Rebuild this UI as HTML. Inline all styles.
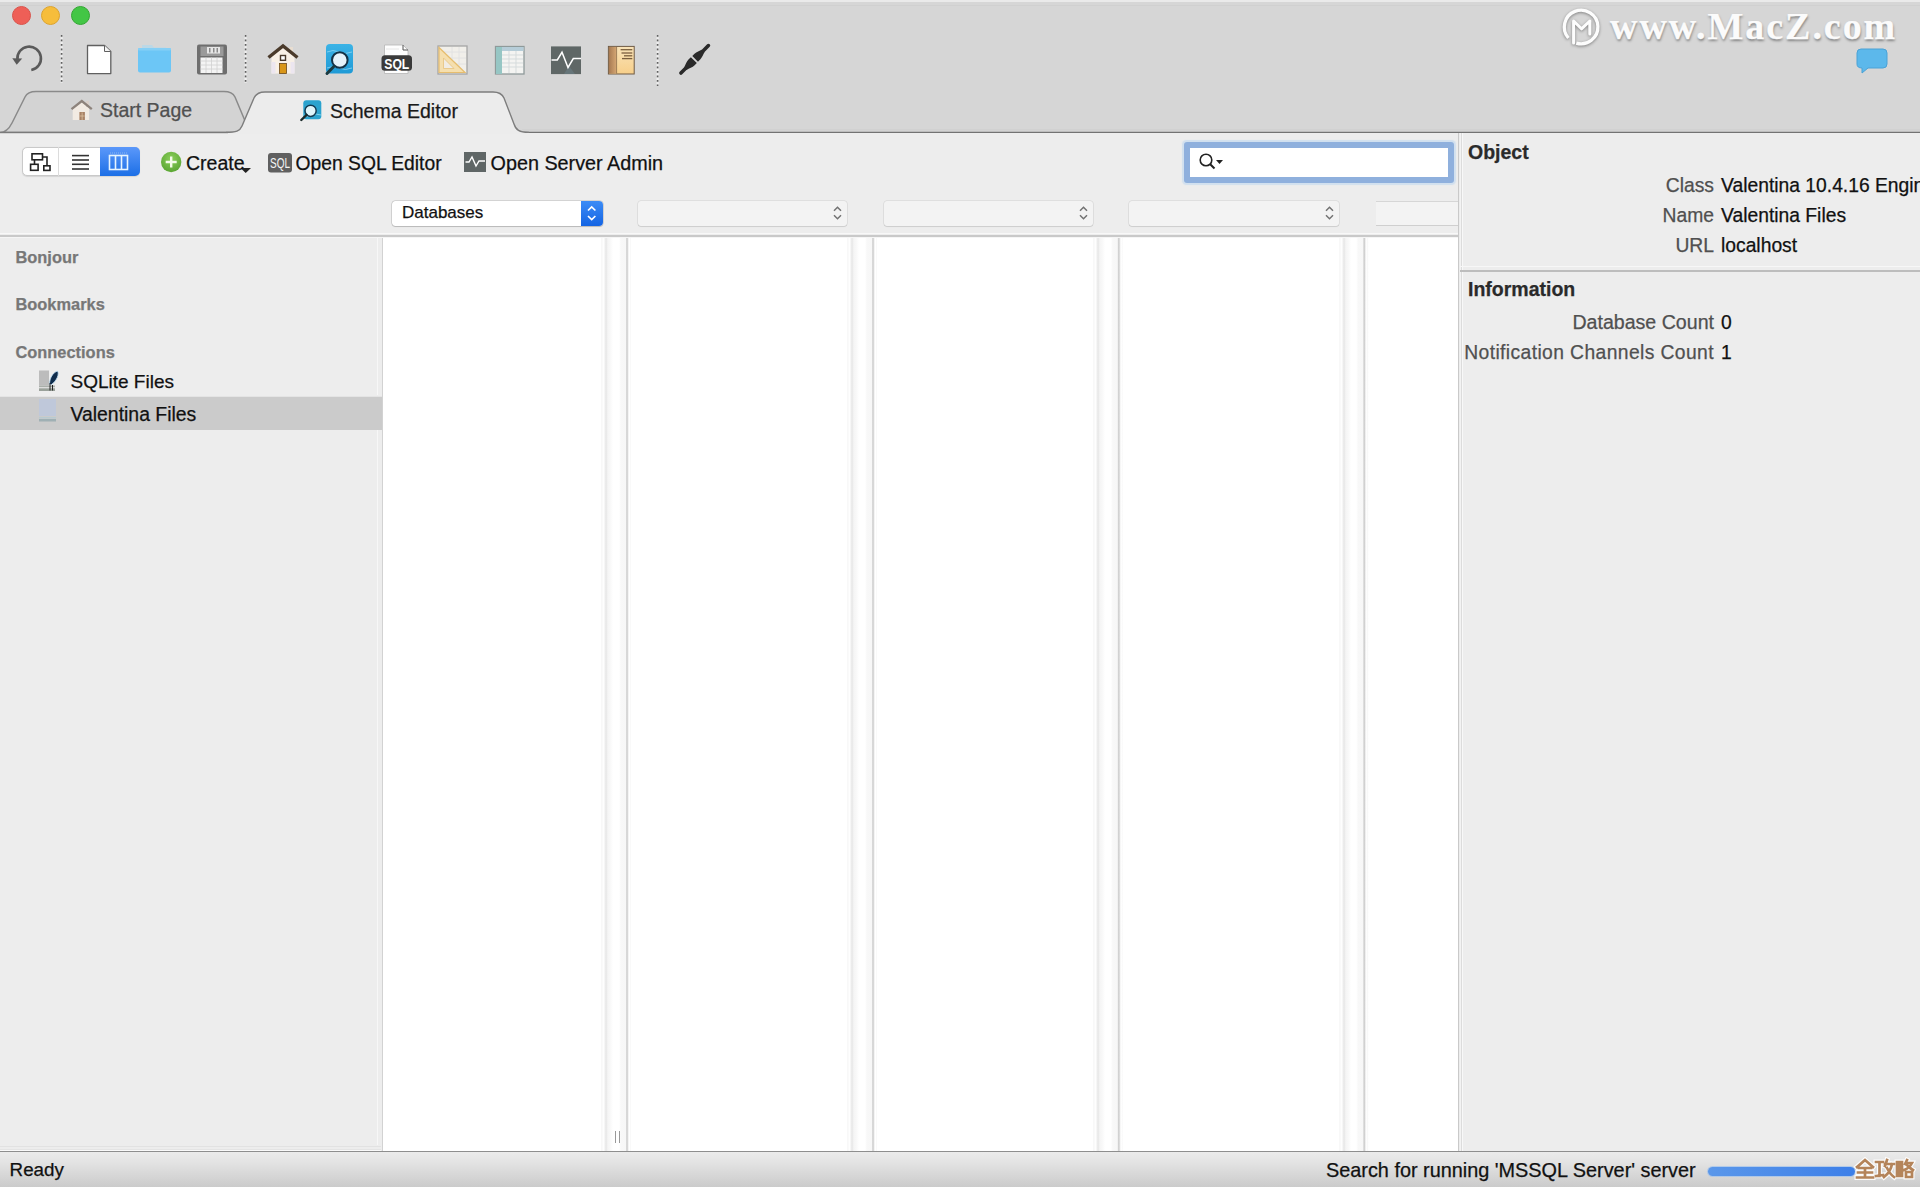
<!DOCTYPE html>
<html><head><meta charset="utf-8">
<style>
*{margin:0;padding:0;box-sizing:border-box}
html,body{width:1920px;height:1187px;overflow:hidden;background:#ededed;font-family:"Liberation Sans",sans-serif;color:#1d1d1d}
.a{position:absolute}
.t{position:absolute;white-space:pre;line-height:1;-webkit-text-stroke:0.25px currentColor}
svg{position:absolute;overflow:visible}
</style></head><body>
<!-- title/toolbar -->
<div class="a" style="left:0;top:0;width:1920px;height:132px;background:#d6d6d6"></div>
<div class="a" style="left:0;top:0;width:1920px;height:2px;background:#eaeaea"></div>
<div class="a" style="left:0;top:5px;width:1920px;height:1.2px;background:#d0d0d0"></div>
<div class="a" style="left:11.5px;top:6px;width:19px;height:19px;border-radius:50%;background:#ee5f57;border:1px solid #d9534b"></div>
<div class="a" style="left:41px;top:6px;width:19px;height:19px;border-radius:50%;background:#f6bd3b;border:1px solid #dca32e"></div>
<div class="a" style="left:70.5px;top:6px;width:19px;height:19px;border-radius:50%;background:#43c645;border:1px solid #33a633"></div>

<!-- TOOLBAR ICONS -->
<svg id="icons" width="1920" height="132" style="left:0;top:0">
  <!-- undo -->
  <path d="M17.4,59.5 A11.8,11.8 0 1 1 31.3,70" fill="none" stroke="#5a5a5a" stroke-width="2.6"/>
  <path d="M12.3,58.2 L22.2,58.4 L16.7,64.8 Z" fill="#5a5a5a"/>
  <!-- separators -->
  <line x1="61.6" y1="35" x2="61.6" y2="83" stroke="#fafafa" stroke-width="2.2" stroke-dasharray="2.2,2.3" stroke-dashoffset="-2.2" opacity="0.7"/><line x1="61.6" y1="35" x2="61.6" y2="83" stroke="#606060" stroke-width="1.5" stroke-dasharray="1.8,2.7"/>
  <line x1="245.6" y1="35" x2="245.6" y2="83" stroke="#fafafa" stroke-width="2.2" stroke-dasharray="2.2,2.3" stroke-dashoffset="-2.2" opacity="0.7"/><line x1="245.6" y1="35" x2="245.6" y2="83" stroke="#606060" stroke-width="1.5" stroke-dasharray="1.8,2.7"/>
  <line x1="657.6" y1="35" x2="657.6" y2="86" stroke="#fafafa" stroke-width="2.2" stroke-dasharray="2.2,2.3" stroke-dashoffset="-2.2" opacity="0.7"/><line x1="657.6" y1="35" x2="657.6" y2="86" stroke="#606060" stroke-width="1.5" stroke-dasharray="1.8,2.7"/>
  <!-- new doc -->
  <path d="M87.5,45.5 L104.5,45.5 L110.8,51.5 L110.8,73.6 L87.5,73.6 Z" fill="#fff" stroke="#606060" stroke-width="1.3" stroke-linejoin="round"/>
  <path d="M104.5,45.5 L104.5,51.5 L110.8,51.5" fill="#f4f4f4" stroke="#606060" stroke-width="1"/>
  <!-- folder -->
  <path d="M142,45 L152,45 L154,47.5 L166,47.5 L166,50 L142,50 Z" fill="#bcd8e6"/>
  <rect x="138" y="48" width="33" height="24.5" rx="2" fill="#6cc6f6"/>
  <rect x="138" y="48" width="33" height="2.5" rx="1" fill="#86cff5"/>
  <!-- save -->
  <rect x="197" y="44.5" width="30" height="30" rx="2" fill="#6e6e6e"/>
  <rect x="200.5" y="46.5" width="23" height="9.5" fill="#9a9a9a"/>
  <rect x="207" y="47" width="13" height="6.5" fill="#e6e6e6"/>
  <g fill="#8a8a8a"><rect x="209" y="48" width="1.5" height="4.5"/><rect x="213" y="48" width="1.5" height="4.5"/><rect x="216.5" y="48" width="1.5" height="4.5"/></g>
  <rect x="200.5" y="57.5" width="22" height="15.5" fill="#f4f4f4"/>
  <g stroke="#d0d0d0" stroke-width="0.8"><line x1="200.5" y1="61" x2="222.5" y2="61"/><line x1="200.5" y1="65" x2="222.5" y2="65"/><line x1="200.5" y1="69" x2="222.5" y2="69"/><line x1="206" y1="57.5" x2="206" y2="73"/><line x1="211.5" y1="57.5" x2="211.5" y2="73"/><line x1="217" y1="57.5" x2="217" y2="73"/></g>
  <!-- home -->
  <rect x="289.5" y="47" width="3.5" height="7" fill="#e8ddd0"/>
  <path d="M271.5,56 L283,46.5 L294.5,56 L294.5,73.5 L271.5,73.5 Z" fill="#f8f0e6"/>
  <rect x="271.5" y="62" width="4" height="11.5" fill="#ece6f0"/>
  <rect x="290.5" y="62" width="4" height="11.5" fill="#ece6f0"/>
  <path d="M268.5,57.5 L283,46 L297.5,57.5" fill="none" stroke="#4a3a2b" stroke-width="3.4" stroke-linejoin="miter"/>
  <rect x="279.5" y="63.5" width="7" height="10" fill="#d99618" stroke="#6b4a1c" stroke-width="0.8"/>
  <rect x="280.5" y="55.5" width="5" height="4.8" fill="#fff" stroke="#4a3a2b" stroke-width="1.4"/>
  <!-- schema editor -->
  <defs><linearGradient id="sg" x1="0" y1="0" x2="0" y2="1"><stop offset="0" stop-color="#3bb3e6"/><stop offset="1" stop-color="#1f9ad6"/></linearGradient></defs>
  <rect x="326" y="44" width="27" height="29.5" rx="4" fill="url(#sg)"/>
  <g fill="none" stroke="#8fd6f3" stroke-width="1" opacity="0.8"><path d="M327,52 Q333,49 339,52 T352,52"/><path d="M327,68 Q333,65 339,68 T352,68"/></g>
  <circle cx="339.8" cy="60" r="7.8" fill="#e6f3fa" stroke="#143246" stroke-width="2"/>
  <line x1="333.8" y1="66.5" x2="327" y2="73.5" stroke="#1b3a40" stroke-width="3" stroke-linecap="round"/>
  <!-- SQL -->
  <path d="M384.5,45 L403,45 L408,50 L408,73.5 L384.5,73.5 Z" fill="#fdfdfd" stroke="#b5b5b5" stroke-width="0.8"/>
  <path d="M403,45 L403,50 L408,50" fill="none" stroke="#555" stroke-width="1"/>
  <line x1="386" y1="49" x2="399" y2="49" stroke="#e0e0e0" stroke-width="0.8"/>
  <rect x="381.5" y="55.3" width="30.5" height="15.5" rx="3.5" fill="#3a3a3a"/>
  <text x="396.8" y="68.6" text-anchor="middle" font-family="Liberation Sans" font-weight="bold" font-size="14.5" fill="#fff" textLength="25" lengthAdjust="spacingAndGlyphs">SQL</text>
  <!-- ruler/diagram -->
  <rect x="438" y="46" width="29" height="28" fill="#f1efea" stroke="#a5a5a5" stroke-width="1.3"/>
  <g stroke="#e2e2e2" stroke-width="1"><line x1="439" y1="52" x2="466" y2="52"/><line x1="439" y1="58" x2="466" y2="58"/><line x1="439" y1="64" x2="466" y2="64"/><line x1="452" y1="47" x2="452" y2="73"/><line x1="459" y1="47" x2="459" y2="73"/></g>
  <path d="M439,47.5 L439,72.5 L465,72.5 Z" fill="#f5dfae" stroke="#e6bd6e" stroke-width="1.2"/>
  <path d="M443.5,58 L443.5,68.5 L454,68.5 Z" fill="#f1ece3" stroke="#e6c37e" stroke-width="0.8"/>
  <!-- table -->
  <rect x="495.5" y="46.5" width="28.5" height="27.5" fill="#f4f4f2" stroke="#8f9a9a" stroke-width="1.3"/>
  <rect x="496" y="47" width="6" height="27" fill="#96c6c4"/>
  <rect x="502" y="47" width="21.5" height="4" fill="#b6cdd8"/>
  <g stroke="#d5dbdc" stroke-width="1"><line x1="502" y1="55" x2="523" y2="55"/><line x1="502" y1="59" x2="523" y2="59"/><line x1="502" y1="63" x2="523" y2="63"/><line x1="502" y1="67" x2="523" y2="67"/><line x1="509" y1="51" x2="509" y2="73"/><line x1="516" y1="51" x2="516" y2="73"/></g>
  <!-- activity -->
  <rect x="551" y="46.4" width="30" height="27.7" fill="#5f6766"/>
  <path d="M564,74 L569,66 L575,74 Z" fill="#6a7f86" opacity="0.6"/>
  <path d="M551.5,60 L557.3,60 L562,52.3 L568,67.5 L573.3,58.5 L581,58.5" fill="none" stroke="#fff" stroke-width="1.5" stroke-linejoin="miter"/>
  <!-- book -->
  <defs><linearGradient id="bk" x1="0" y1="0" x2="1" y2="0"><stop offset="0" stop-color="#a77a52"/><stop offset="1" stop-color="#d4a673"/></linearGradient>
  <linearGradient id="pg" x1="0" y1="0" x2="0" y2="1"><stop offset="0" stop-color="#f9e3b8"/><stop offset="1" stop-color="#f7cf8a"/></linearGradient></defs>
  <rect x="608.4" y="46.4" width="25.8" height="27.6" fill="url(#pg)" stroke="#6e5a45" stroke-width="1"/>
  <rect x="608.9" y="46.9" width="7.5" height="26.6" fill="url(#bk)"/>
  <line x1="616.6" y1="47" x2="616.6" y2="73.5" stroke="#8a6a48" stroke-width="0.8"/>
  <g stroke="#7a5e3e" stroke-width="1.3"><line x1="620.6" y1="49.7" x2="632.3" y2="49.7"/><line x1="621.5" y1="53" x2="632.3" y2="53"/><line x1="624" y1="55.8" x2="632.3" y2="55.8"/><line x1="622" y1="58.6" x2="632.3" y2="58.6"/></g>
  <!-- plug -->
  <g transform="translate(694.5,59.5) rotate(-45)" fill="#2a2a2a">
    <rect x="-21" y="-1.8" width="10" height="3.6" rx="1.8"/>
    <path d="M-13,-1.8 C-10,-2.5 -7,-4.2 -4,-4.2 L-0.9,-4.2 L-0.9,4.2 L-4,4.2 C-7,4.2 -10,2.5 -13,1.8 Z"/>
    <path d="M0.9,-4 L4,-4 C7,-4 9.5,-2.5 12.5,-1.8 L12.5,1.8 C9.5,2.5 7,4 4,4 L0.9,4 Z"/>
    <rect x="11" y="-1.8" width="10.5" height="3.6" rx="1.8"/>
  </g>
  <!-- chat bubble -->
  <path d="M1861,49 L1883,49 Q1887,49 1887,53 L1887,64 Q1887,68 1883,68 L1868,68 L1862,73 L1862,68 Q1857,68 1857,64 L1857,53 Q1857,49 1861,49Z" fill="#5cb8eb" stroke="#4aa2d6" stroke-width="1"/>
</svg>

<!-- watermark -->
<svg width="60" height="60" style="left:1555px;top:0;filter:drop-shadow(0 1px 1.5px rgba(0,0,0,0.4))">
  <path d="M21.3,43.1 A16.8,16.8 0 1 0 13.4,38" fill="none" stroke="#fdfdfd" stroke-width="3.3"/>
  <path d="M18.6,43 L18.6,21 L26.5,28.8 L34.8,21 L34.8,34" fill="none" stroke="#fdfdfd" stroke-width="3" stroke-linejoin="round" stroke-linecap="round"/>
</svg>
<div class="t" style="left:1610px;top:7px;font-family:'Liberation Serif',serif;font-weight:bold;font-size:38px;letter-spacing:1.95px;color:#fbfbfb;text-shadow:0.5px 1.5px 2.5px rgba(0,0,0,0.4)">www.MacZ.com</div>

<!-- TABS -->
<svg width="1920" height="50" style="left:0;top:85px">
  <path d="M0,47.4 C6,47.4 9,44 12,38 L25,12 C27,8 30,6.5 36,6.5 L224,6.5 C230,6.5 233,8 235,12 L248,43 C250,47 252,47.4 258,47.4 Z" fill="#d3d3d3" stroke="#8a8a8a" stroke-width="1.5"/>
  <line x1="0" y1="47.4" x2="234" y2="47.4" stroke="#7a7a7a" stroke-width="1.2"/>
  <line x1="522" y1="45" x2="1920" y2="45" stroke="#cdcdcd" stroke-width="1"/><line x1="522" y1="47.4" x2="1920" y2="47.4" stroke="#737373" stroke-width="1.2"/>
  <path d="M228,49 L228,47.4 C236,47.4 240,46 242,41 L254,13 C256,8.5 259,7 265,7 L493,7 C499,7 502,8.5 504,13 L514,39 C516,45 519,47.4 527,47.4 L527,49 Z" fill="#ececec" stroke="none"/>
  <path d="M226,47.4 C236,47.4 240,46 242,41 L254,13 C256,8.5 259,7 265,7 L493,7 C499,7 502,8.5 504,13 L514,39 C516,45 519,47.4 529,47.4" fill="none" stroke="#7d7d7d" stroke-width="1.4"/>
</svg>
<!-- tab icons -->
<svg width="30" height="30" style="left:68px;top:96px">
  <path d="M4.7,12.5 L13.8,5.5 L21.1,11 L21.1,24 L4.7,24 Z" fill="#f2ebe3"/>
  <rect x="18" y="5" width="3" height="6" fill="#d9cfc8"/>
  <path d="M3.5,13.2 L13.8,5 L23.8,13.2" fill="none" stroke="#8d837c" stroke-width="2.3"/>
  <rect x="11.4" y="16" width="5.5" height="8" fill="#a98366"/>
  <path d="M14.15,16.5 L14.15,24 M11.6,20 L16.7,20" stroke="#e2c8a8" stroke-width="0.7"/>
</svg>
<div class="t" style="left:100px;top:101px;font-size:19.5px;color:#505050">Start Page</div>
<svg width="30" height="30" style="left:296px;top:96px">
  <rect x="7.3" y="4.2" width="18" height="19" rx="3" fill="#2ba3cf"/>
  <path d="M7.5,19 Q12,22 16,19.5 T25,19" fill="none" stroke="#7fd3ec" stroke-width="1"/>
  <circle cx="14.6" cy="14.8" r="5.6" fill="#dff4fa" stroke="#123b52" stroke-width="1.5"/>
  <line x1="10.6" y1="18.8" x2="5.3" y2="24" stroke="#1a2a2a" stroke-width="2.4" stroke-linecap="round"/>
</svg>
<div class="t" style="left:330px;top:101.5px;font-size:19.5px;color:#1a1a1a">Schema Editor</div>

<!-- CONTENT TOOLBAR -->
<div class="a" style="left:22px;top:146.5px;width:117.5px;height:29.5px;background:#fff;border:1px solid #c9c9c9;border-radius:5px;box-shadow:0 0.5px 1px rgba(0,0,0,0.1)"></div>
<div class="a" style="left:57.5px;top:147px;width:1px;height:28.5px;background:#dcdcdc"></div>
<div class="a" style="left:100px;top:146.5px;width:39.5px;height:29.5px;background:linear-gradient(#5b98fa,#1c6fe6);border-radius:0 5px 5px 0"></div>
<svg width="140" height="40" style="left:0;top:140px">
  <g fill="none" stroke="#222" stroke-width="1.6">
    <rect x="32" y="13.8" width="10.5" height="6"/>
    <rect x="30.6" y="24.3" width="7.5" height="6"/>
    <rect x="43.8" y="25.8" width="6.2" height="4.6"/>
    <path d="M34.5,20 L34.5,24.3 M42.5,17 L47,17 L47,25.8"/>
  </g>
  <g stroke="#333" stroke-width="1.6"><line x1="72" y1="15.6" x2="89" y2="15.6"/><line x1="72" y1="20" x2="89" y2="20"/><line x1="72" y1="24.3" x2="89" y2="24.3"/><line x1="72" y1="29" x2="89" y2="29"/></g>
  <rect x="109.5" y="15.5" width="18" height="14" fill="none" stroke="#e6f4ff" stroke-width="1.6"/>
  <g stroke="#e6f4ff" stroke-width="1.6"><line x1="115.5" y1="15.5" x2="115.5" y2="29.5"/><line x1="121.5" y1="15.5" x2="121.5" y2="29.5"/></g>
  <line x1="110" y1="13" x2="127" y2="13" stroke="#8fb8f0" stroke-width="1" stroke-dasharray="1,1"/>
</svg>
<!-- create -->
<svg width="100" height="40" style="left:150px;top:140px">
  <defs><radialGradient id="gc" cx="0.5" cy="0.35" r="0.6"><stop offset="0" stop-color="#8ccf5c"/><stop offset="1" stop-color="#5ea936"/></radialGradient></defs>
  <circle cx="21.2" cy="22" r="10.2" fill="url(#gc)"/>
  <path d="M21.2,16.5 L21.2,27.5 M15.7,22 L26.7,22" stroke="#f2fbe8" stroke-width="2.4"/>
  <path d="M90.5,28 L101,28 L95.7,33 Z" fill="#222"/>
</svg>
<div class="t" style="left:186px;top:153.5px;font-size:19.5px;color:#111">Create</div>
<svg width="30" height="30" style="left:260px;top:145px">
  <rect x="8" y="8" width="24" height="19.5" rx="3" fill="#606060"/>
  <text x="20" y="23" text-anchor="middle" font-family="Liberation Sans" font-size="14.5" fill="#f4f4f4" textLength="20" lengthAdjust="spacingAndGlyphs">SQL</text>
</svg>
<div class="t" style="left:295.5px;top:153.5px;font-size:19.3px;color:#111">Open SQL Editor</div>
<svg width="30" height="30" style="left:460px;top:145px">
  <rect x="4" y="7" width="22" height="20" fill="#5f6666"/>
  <path d="M5.5,17 L9,17 L12,12 L16,21 L19,16 L25,16" fill="none" stroke="#fff" stroke-width="1.4"/>
</svg>
<div class="t" style="left:490.5px;top:153.5px;font-size:19.8px;color:#111">Open Server Admin</div>

<!-- search -->
<div class="a" style="left:1184px;top:141.5px;width:269.5px;height:41px;border-radius:3px;background:#8fb0dd;box-shadow:0 0 1px 1.5px rgba(190,215,240,0.6)"></div>
<div class="a" style="left:1189.5px;top:147.5px;width:258.5px;height:29.5px;background:#fff"></div>
<svg width="40" height="30" style="left:1190px;top:145px">
  <circle cx="16" cy="15" r="5.8" fill="none" stroke="#222" stroke-width="1.6"/>
  <line x1="20.2" y1="19.2" x2="24.5" y2="23.5" stroke="#222" stroke-width="2"/>
  <path d="M26,15 L33,15 L29.5,19 Z" fill="#222"/>
</svg>

<!-- popups row -->
<div class="a" style="left:0;top:233px;width:1459px;height:1px;background:#f8f8f8"></div>
<div class="a" style="left:0;top:235px;width:1459px;height:1.5px;background:#c9c9c9"></div>
<div class="a" style="left:0;top:237px;width:1459px;height:1px;background:#f5f5f5"></div>

<div class="a" style="left:391.5px;top:200.5px;width:211px;height:25px;background:#fff;border-radius:3.5px;box-shadow:0 0 0 0.5px rgba(0,0,0,0.22),0 1px 1px rgba(0,0,0,0.12)"></div>
<div class="a" style="left:581px;top:200.5px;width:21.5px;height:25px;background:linear-gradient(#3c8cf6,#1464e3);border-radius:0 4px 4px 0"></div>
<svg width="30" height="30" style="left:581px;top:200px">
  <path d="M7,10.5 L10.7,7 L14.4,10.5 M7,16 L10.7,19.5 L14.4,16" fill="none" stroke="#fff" stroke-width="1.7"/>
</svg>
<div class="t" style="left:402px;top:204px;font-size:17px;color:#111">Databases</div>

<div class="a" style="left:638px;top:200.5px;width:209px;height:25px;background:#f3f3f3;border-radius:3px;box-shadow:0 0 0 0.5px rgba(0,0,0,0.12),0 1px 1px rgba(0,0,0,0.08)"></div>
<svg width="20" height="30" style="left:831px;top:200px"><path d="M3,10.8 L6.5,7.3 L10,10.8 M3,15.2 L6.5,18.7 L10,15.2" fill="none" stroke="#727272" stroke-width="1.5"/></svg>
<div class="a" style="left:883.5px;top:200.5px;width:209px;height:25px;background:#f3f3f3;border-radius:3px;box-shadow:0 0 0 0.5px rgba(0,0,0,0.12),0 1px 1px rgba(0,0,0,0.08)"></div>
<svg width="20" height="30" style="left:1077px;top:200px"><path d="M3,10.8 L6.5,7.3 L10,10.8 M3,15.2 L6.5,18.7 L10,15.2" fill="none" stroke="#727272" stroke-width="1.5"/></svg>
<div class="a" style="left:1129px;top:200.5px;width:210px;height:25px;background:#f3f3f3;border-radius:3px;box-shadow:0 0 0 0.5px rgba(0,0,0,0.12),0 1px 1px rgba(0,0,0,0.08)"></div>
<svg width="20" height="30" style="left:1322.5px;top:200px"><path d="M3,10.8 L6.5,7.3 L10,10.8 M3,15.2 L6.5,18.7 L10,15.2" fill="none" stroke="#727272" stroke-width="1.5"/></svg>
<div class="a" style="left:1376px;top:200.5px;width:82px;height:25.5px;background:#f3f3f3;border-top:1px solid #d6d6d6;border-bottom:1.5px solid #cfcfcf"></div>

<!-- sidebar -->
<div class="t" style="left:15.5px;top:249px;font-size:16.4px;font-weight:bold;color:#777">Bonjour</div>
<div class="t" style="left:15.5px;top:296px;font-size:16.4px;font-weight:bold;color:#777">Bookmarks</div>
<div class="t" style="left:15.5px;top:344px;font-size:16.4px;font-weight:bold;color:#777">Connections</div>
<svg width="30" height="30" style="left:35px;top:366px">
  <rect x="4" y="4.5" width="10" height="15" fill="#bcbcbc"/>
  <rect x="4" y="19.5" width="16" height="1.5" fill="#a9aea9"/>
  <rect x="4" y="21" width="16" height="1.3" fill="#dcdcdc"/>
  <rect x="4" y="22.3" width="16" height="2.7" fill="#9aa19a"/>
  <path d="M14.5,18.5 C14.5,12 18,6.5 22.5,5 C24.5,8 22,14.5 16.5,18.5 Z" fill="#0f2c4c" stroke="#bfe0f5" stroke-width="0.8"/>
  <path d="M15,17 L15,24.5 M17.5,19 L17.5,24.5" stroke="#222" stroke-width="1"/>
</svg>
<div class="t" style="left:70.5px;top:372px;font-size:19px;color:#111">SQLite Files</div>

<div class="a" style="left:0;top:397px;width:381.5px;height:33px;background:#cbcbcb"></div>
<div class="a" style="left:0;top:395.5px;width:381.5px;height:1.5px;background:#e4e4e4"></div>
<svg width="30" height="30" style="left:35px;top:398px">
  <rect x="4" y="1" width="17" height="17" fill="#bfc8da"/>
  <rect x="4" y="19" width="17" height="1.5" fill="#b8cad0"/>
  <rect x="4" y="21" width="17" height="2.5" fill="#9fb0b4"/>
</svg>
<div class="t" style="left:70.5px;top:404.5px;font-size:19.4px;color:#111">Valentina Files</div>
<div class="a" style="left:377px;top:238px;width:1px;height:157px;background:#f7f7f7"></div>
<div class="a" style="left:377px;top:430px;width:1px;height:715px;background:#f7f7f7"></div>
<div class="a" style="left:0;top:1146px;width:381px;height:1px;background:#e2e2e2"></div>
<div class="a" style="left:0;top:1148.5px;width:381px;height:1px;background:#e4e4e4"></div>
<div class="a" style="left:0;top:1150px;width:381px;height:1px;background:#fafafa"></div>
<div class="a" style="left:381.5px;top:238px;width:1.5px;height:914px;background:#d2d2d2"></div>

<!-- columns -->
<div class="a" style="left:383px;top:238px;width:1075px;height:914px;background:#fff"></div>
<div class="a" style="left:600px;top:238px;width:32.0px;height:914px;background:linear-gradient(90deg,#fff 0.5px,#f8f8f8 1.5px,#fbfbfb 3.0px,#fff 3.7px,#e6e6e6 6.0px,#f5f5f5 7.8px,#f8f8f8 10.0px,#fff 13.0px,#fff 19.0px,#f8f8f8 21.0px,#f7f7f7 25.5px,#c8c8c8 27.0px,#f4f4f4 28.5px,#fff 29.5px,#f8f8f8 30.3px,#fff 31.5px)"></div>
<div class="a" style="left:846px;top:238px;width:32.0px;height:914px;background:linear-gradient(90deg,#fff 0.5px,#f8f8f8 1.5px,#fbfbfb 3.0px,#fff 3.7px,#e6e6e6 6.0px,#f5f5f5 7.8px,#f8f8f8 10.0px,#fff 13.0px,#fff 19.0px,#f8f8f8 21.0px,#f7f7f7 25.5px,#c8c8c8 27.0px,#f4f4f4 28.5px,#fff 29.5px,#f8f8f8 30.3px,#fff 31.5px)"></div>
<div class="a" style="left:1092px;top:238px;width:31.8px;height:914px;background:linear-gradient(90deg,#fff 0.5px,#f8f8f8 1.5px,#fbfbfb 3.0px,#fff 3.7px,#e6e6e6 6.0px,#f5f5f5 7.8px,#f8f8f8 10.0px,#fff 13.0px,#fff 18.8px,#f8f8f8 20.8px,#f7f7f7 25.3px,#c8c8c8 26.8px,#f4f4f4 28.3px,#fff 29.3px,#f8f8f8 30.1px,#fff 31.3px)"></div>
<div class="a" style="left:1338.4px;top:238px;width:31.2px;height:914px;background:linear-gradient(90deg,#fff 0.5px,#f8f8f8 1.5px,#fbfbfb 3.0px,#fff 3.7px,#e6e6e6 6.0px,#f5f5f5 7.8px,#f8f8f8 10.0px,#fff 13.0px,#fff 18.2px,#f8f8f8 20.2px,#f7f7f7 24.7px,#c8c8c8 26.2px,#f4f4f4 27.7px,#fff 28.7px,#f8f8f8 29.5px,#fff 30.7px)"></div>
<div class="a" style="left:614.5px;top:1131px;width:1.2px;height:12px;background:#999"></div>
<div class="a" style="left:619px;top:1131px;width:1.2px;height:12px;background:#999"></div>
<!-- inspector -->
<div class="a" style="left:1458px;top:133px;width:462px;height:1019px;background:#ededed;border-left:1.5px solid #c9c9c9"></div>
<div class="a" style="left:1459.5px;top:133px;width:2px;height:1019px;background:#f3f3f3"></div>
<div class="a" style="left:1461.2px;top:133px;width:1px;height:1019px;background:#dcdcdc"></div>
<div class="a" style="left:1462.3px;top:133px;width:1.2px;height:1019px;background:#f8f8f8"></div>
<div class="t" style="left:1468px;top:143px;font-size:19.5px;font-weight:bold;color:#2a2a2a">Object</div>
<div class="t" style="left:1500px;top:176px;width:214px;text-align:right;font-size:19.3px;color:#505050">Class</div>
<div class="t" style="left:1721px;top:176px;font-size:19.3px;color:#111">Valentina 10.4.16 Engine</div>
<div class="t" style="left:1500px;top:206px;width:214px;text-align:right;font-size:19.3px;color:#505050">Name</div>
<div class="t" style="left:1721px;top:206px;font-size:19.3px;color:#111">Valentina Files</div>
<div class="t" style="left:1500px;top:236px;width:214px;text-align:right;font-size:19.3px;color:#505050">URL</div>
<div class="t" style="left:1721px;top:236px;font-size:19.3px;color:#111">localhost</div>
<div class="a" style="left:1460px;top:266px;width:460px;height:1px;background:#f7f7f7"></div>
<div class="a" style="left:1460px;top:270px;width:460px;height:1.5px;background:#bdbdbd"></div>
<div class="t" style="left:1468px;top:280px;font-size:19.5px;font-weight:bold;color:#2a2a2a">Information</div>
<div class="t" style="left:1400px;top:313px;width:314px;text-align:right;font-size:19.6px;color:#505050">Database Count</div>
<div class="t" style="left:1721px;top:313px;font-size:19.3px;color:#111">0</div>
<div class="t" style="left:1400px;top:343px;width:314px;text-align:right;font-size:19.3px;letter-spacing:0.4px;color:#505050">Notification Channels Count</div>
<div class="t" style="left:1721px;top:343px;font-size:19.3px;color:#111">1</div>

<!-- status bar -->
<div class="a" style="left:0;top:1151px;width:1920px;height:36px;background:linear-gradient(#ebebeb 0%,#e3e3e3 30%,#cbcbcb 100%);border-top:1.5px solid #8e8e8e"></div>
<div class="t" style="left:9.6px;top:1160.5px;font-size:18.8px;color:#111">Ready</div>
<div class="t" style="left:1326px;top:1160.5px;font-size:19.85px;color:#111">Search for running 'MSSQL Server' server</div>
<div class="a" style="left:1708px;top:1166.5px;width:147px;height:9.5px;border-radius:5px;background:linear-gradient(90deg,#5a97ea,#3d7fe8);box-shadow:0 0 0 1px rgba(150,190,240,0.6)"></div>
<svg width="70" height="30" style="left:1850px;top:1155px">
 <g fill="none" stroke="#fff" stroke-width="5" stroke-linecap="square" opacity="0.9">
  <path d="M7,12 L15,5 L23,12 M9,13 L21,13 M8,17.5 L22,17.5 M15,13 L15,22 M7,22.5 L23,22.5"/>
  <path d="M26,7 L33,7 M29.5,7 L29.5,21 M26,21 L33,20 M37,5 L35,11 M35,9 L44,9 M42,9 C41,15 38,19 34,22 M37,13 C39,17 41,20 44,22"/>
  <path d="M47,7 L52,7 L52,21 L47,21 Z M47,14 L52,14 M49.5,7 L49.5,21 M57,5 L55,9 M56,8 L62,8 C60,12 57,14 54,15 M57,10 C59,12 61,14 63,15 M56,17 L62,17 L62,22 L56,22 Z"/>
 </g>
 <g fill="none" stroke="#b4845a" stroke-width="2.7" stroke-linecap="square">
  <path d="M7,12 L15,5 L23,12 M9,13 L21,13 M8,17.5 L22,17.5 M15,13 L15,22 M7,22.5 L23,22.5"/>
  <path d="M26,7 L33,7 M29.5,7 L29.5,21 M26,21 L33,20 M37,5 L35,11 M35,9 L44,9 M42,9 C41,15 38,19 34,22 M37,13 C39,17 41,20 44,22"/>
  <path d="M47,7 L52,7 L52,21 L47,21 Z M47,14 L52,14 M49.5,7 L49.5,21 M57,5 L55,9 M56,8 L62,8 C60,12 57,14 54,15 M57,10 C59,12 61,14 63,15 M56,17 L62,17 L62,22 L56,22 Z"/>
 </g>
</svg>
</body></html>
